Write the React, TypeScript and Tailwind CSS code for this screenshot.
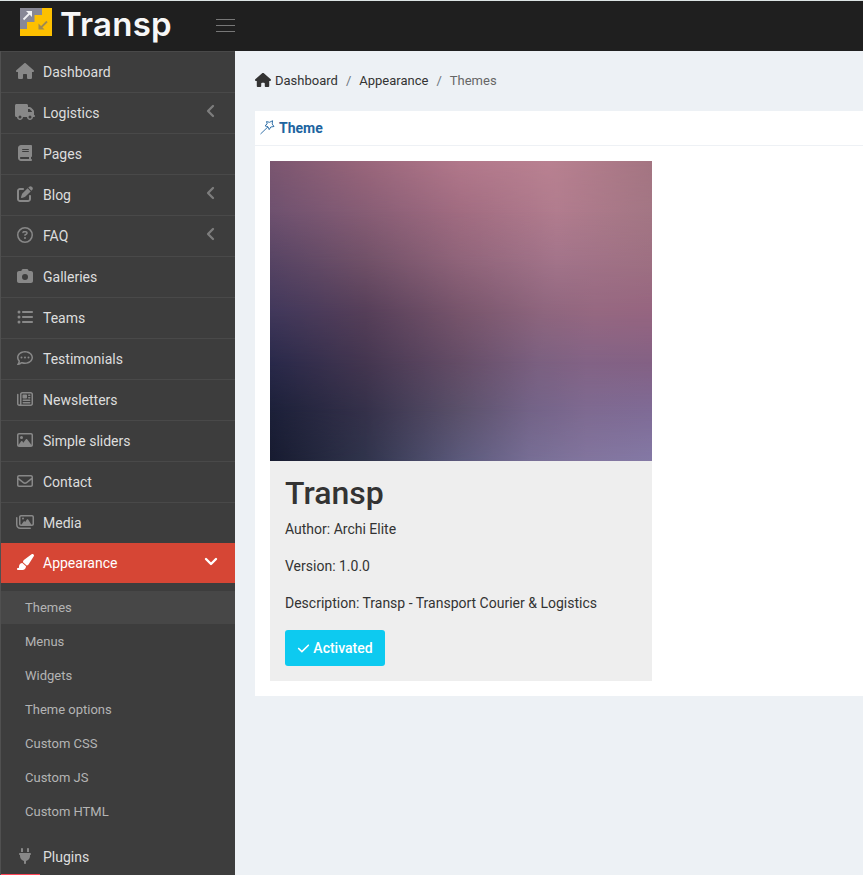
import {
  FaHouse, FaTruck, FaBook, FaPenToSquare, FaRegCircleQuestion, FaCamera, FaListUl, FaRegCommentDots,
  FaRegNewspaper, FaRegImage, FaRegEnvelope, FaRegImages, FaPaintbrush, FaPlug, FaCheck,
} from "react-icons/fa6";
import type { IconType } from "react-icons";

type Item = { label: string; icon: IconType; more?: boolean };

const items: Item[] = [
  { label: "Dashboard", icon: FaHouse },
  { label: "Logistics", icon: FaTruck, more: true },
  { label: "Pages", icon: FaBook },
  { label: "Blog", icon: FaPenToSquare, more: true },
  { label: "FAQ", icon: FaRegCircleQuestion, more: true },
  { label: "Galleries", icon: FaCamera },
  { label: "Teams", icon: FaListUl },
  { label: "Testimonials", icon: FaRegCommentDots },
  { label: "Newsletters", icon: FaRegNewspaper },
  { label: "Simple sliders", icon: FaRegImage },
  { label: "Contact", icon: FaRegEnvelope },
  { label: "Media", icon: FaRegImages },
];

const children = ["Themes", "Menus", "Widgets", "Theme options", "Custom CSS", "Custom JS", "Custom HTML"];

function Logo() {
  return (
    <svg width="32" height="28" viewBox="0 0 32 28" className="shrink-0">
      <rect width="32" height="28" fill="#fdc000" />
      <path d="M0 0H22V7H14.500V14H7V21H0Z" fill="#888896" />
      <path d="M3.500 11.500L10.500 4.500" stroke="#f2f2f4" strokeWidth="1.800" />
      <path d="M6 3H12V9Z" fill="#f2f2f4" />
      <path d="M27 13.500L20.500 20" stroke="#a08a50" strokeWidth="1.800" />
      <path d="M18.500 15.500V21.500H24.500Z" fill="#a08a50" />
    </svg>
  );
}

function Chevron({ open }: { open?: boolean }) {
  return open ? (
    <svg width="14" height="10" viewBox="0 0 14 10" className="mr-[17px] -translate-y-0.5" fill="none" stroke="#fff" strokeWidth="2.400" strokeLinecap="round" strokeLinejoin="round">
      <path d="M2 3L7 8L12 3" />
    </svg>
  ) : (
    <svg width="9" height="14" viewBox="0 0 9 14" className="mr-5 -translate-y-0.5" fill="none" stroke="#7d7d7d" strokeWidth="2.300" strokeLinecap="round" strokeLinejoin="round">
      <path d="M7 2L2 7L7 12" />
    </svg>
  );
}

/* Soft blended artwork: each band fades in over the one above it. */
function Artwork() {
  return (
    <div className="relative h-[300px] bg-[linear-gradient(90deg,#7b5670,#9a667b_25%,#b2788b_50%,#b98191_73%,#a47582)]">
      <div className="absolute inset-0 bg-[linear-gradient(90deg,#6e516f,#875d75_25%,#a16c81_50%,#b17c8e_75%,#a37684)] mask-[linear-gradient(transparent,black_17%)]" />
      <div className="absolute inset-0 bg-[linear-gradient(90deg,#574464,#715168_25%,#90647a_50%,#a3748a_75%,#9e7082)] mask-[linear-gradient(transparent_17%,black_33%)]" />
      <div className="absolute inset-0 bg-[linear-gradient(90deg,#41385b,#563f59_25%,#78556c_50%,#8f667e_72%,#966881_85%,#966580)] mask-[linear-gradient(transparent_33%,black_50%)]" />
      <div className="absolute inset-0 bg-[linear-gradient(90deg,#29294a,#443650_25%,#654d67_50%,#7b6080_70%,#836385_83%,#846184)] mask-[linear-gradient(transparent_50%,black_67%)]" />
      <div className="absolute inset-0 bg-[linear-gradient(90deg,#1c2039,#35314a_25%,#5b516b_50%,#736387_68%,#7e6a91_83%,#7f6b96)] mask-[linear-gradient(transparent_67%,black_83%)]" />
      <div className="absolute inset-0 bg-[linear-gradient(90deg,#171b30,#30344c_25%,#5c5a7c_50%,#776e95_68%,#82759e_83%,#8479a5)] mask-[linear-gradient(transparent_83%,black)]" />
    </div>
  );
}

export default function App() {
  return (
    <div className="flex h-[875px] w-[863px] flex-col overflow-hidden bg-[#edf1f5] font-[Roboto,sans-serif] text-sm text-[#333]">
      <header className="flex h-[51px] shrink-0 items-start border-t border-[#dce3e3] bg-[#1f1f1f]">
        <div className="flex w-[216px] items-start pt-[7px] pl-5">
          <Logo />
          <span className="-mt-[6px] ml-2 font-[Inter,sans-serif] text-[33px] leading-[44px] font-semibold tracking-[0.2px] text-[#f7f7f7]">Transp</span>
        </div>
        <div className="mt-[18px] flex w-[19px] flex-col gap-[5px]">
          <i className="h-px bg-[#777]" />
          <i className="h-px bg-[#777]" />
          <i className="h-px bg-[#777]" />
        </div>
      </header>
      <div className="flex min-h-0 flex-1">
        <aside className="relative w-[235px] shrink-0 overflow-hidden border-l border-[#505050] bg-[#3d3d3d] text-[#ddd]">
          {items.map(({ label, icon: Icon, more }) => (
            <div key={label} className="flex h-[41px] items-center border-t border-[#494949]">
              <Icon className="ml-3.5 h-4 w-5 -translate-y-px text-[#888]" />
              <span className="ml-2 flex-1">{label}</span>
              {more && <Chevron />}
            </div>
          ))}
          <div className="-ml-px flex h-10 items-center bg-[#d64635] text-white">
            <FaPaintbrush className="ml-[15px] h-4 w-5 -translate-y-px" />
            <span className="ml-2 flex-1">Appearance</span>
            <Chevron open />
          </div>
          <div className="py-2 text-[13px] text-[#b4b4b4]">
            {children.map((c) => (
              <div key={c} className={c === "Themes" ? "mb-px flex h-[33px] items-center bg-[#474747] pt-0.5 pl-6" : "mb-px flex h-[33px] items-center pt-0.5 pl-6"}>{c}</div>
            ))}
          </div>
          <div className="flex h-[39px] items-center">
            <FaPlug className="ml-3.5 h-4 w-5 -translate-y-px text-[#888]" />
            <span className="ml-2">Plugins</span>
          </div>
          <div className="absolute bottom-0 -left-px h-px w-10 bg-[#ff4658]" />
        </aside>
        <main className="min-w-0 flex-1 pl-5">
          <nav className="mt-5 flex h-5 items-center text-[13px]">
            <FaHouse size={16} className="mr-1 -translate-y-px" />
            <span>Dashboard</span>
            <span className="mx-2 text-[#6c757d]">/</span>
            <span>Appearance</span>
            <span className="mx-2 text-[#6c757d]">/</span>
            <span className="text-[#666]">Themes</span>
          </nav>
          <section className="mt-5 h-[585px] bg-white">
            <div className="flex h-[35px] items-center border-b border-[#eef1f5] pl-[5px] font-bold text-[#2064a0]">
              <svg width="15" height="15" viewBox="0 0 15 15" className="mr-1 -translate-y-px" fill="none" stroke="currentColor" strokeWidth=".9">
                <path d="M.5 14L8 6.800M6.500 1.600L9.600 2.300L12.600 .7L12.200 4L14 6.500L10.800 7L9.200 9.600L8 6.800L5 5.800L7.200 3.900Z" />
              </svg>
              Theme
            </div>
            <article className="mt-[15px] ml-[15px] w-[382px]">
              <Artwork />
              <div className="h-[220px] bg-[#eee] px-[15px] pt-3.5">
                <h1 className="text-[32px] leading-9 font-medium">Transp</h1>
                <p className="mt-2 h-[37px] leading-[21px]">Author: Archi Elite</p>
                <p className="h-[37px] leading-[21px]">Version: 1.0.0</p>
                <p className="h-[37px] leading-[21px]">Description: Transp - Transport Courier &amp; Logistics</p>
                <button className="flex h-9 w-[100px] items-center justify-center gap-[3px] rounded-[3px] bg-[#0dcaf0] font-medium text-white">
                  <FaCheck size={13} />Activated
                </button>
              </div>
            </article>
          </section>
        </main>
      </div>
    </div>
  );
}
